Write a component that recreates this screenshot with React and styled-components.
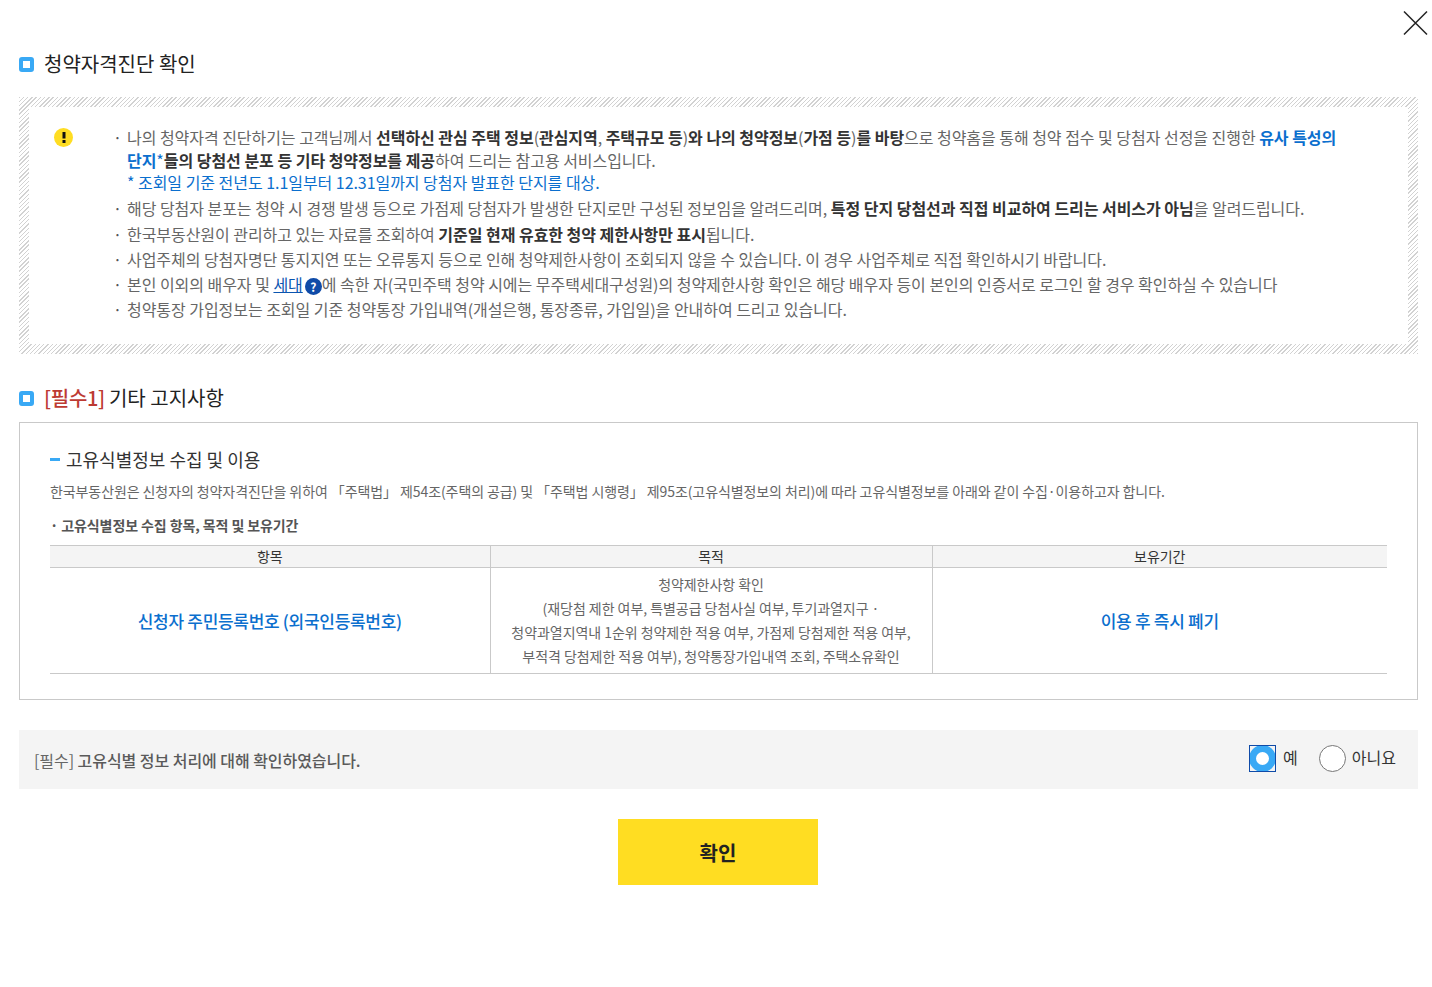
import React from "react";
import styled, { createGlobalStyle } from "styled-components";

const Global = createGlobalStyle`
  *, *::before, *::after { box-sizing: border-box; }
  html, body { margin: 0; padding: 0; background: #fff; }
  body { font-family: "Noto Sans CJK KR", "Noto Sans", sans-serif; color: #666; }
`;

const Page = styled.div`
  position: relative;
  width: 1432px;
  height: 987px;
  padding: 49px 14px 0 19px;
  overflow: hidden;
`;
const Close = styled.button`
  position: absolute;
  top: 10px;
  right: 3px;
  width: 26px;
  height: 26px;
  padding: 0;
  border: 0;
  background: none;
  display: block;
`;
const Heading = styled.h2`
  display: flex;
  align-items: center;
  gap: 10px;
  margin: 0;
  height: 28px;
  font-size: 20px;
  font-weight: 400;
  letter-spacing: 0;
  color: #222;
  &::before {
    content: "";
    width: 15px;
    height: 15px;
    border: 4.5px solid #39a9f5;
    border-radius: 3px;
    background: #fff;
    margin-top: 2px;
  }
`;
const RedLabel = styled.span`
  color: #bd3a32;
  font-weight: 500;
  letter-spacing: -0.3px;
  margin-right: 4px;
`;
const Hatch = styled.div`
  margin-top: 20px;
  height: 257px;
  padding: 10px;
  background: repeating-linear-gradient(135deg, #d2d2d2 0, #d2d2d2 1px, #fff 1px, #fff 3px);
`;
const Notice = styled.div`
  height: 100%;
  background: #fff;
  padding: 19px 58px 0 25px;
  display: flex;
  gap: 43px;
`;
const Warn = styled.span`
  flex: none;
  width: 19px;
  height: 19px;
  margin-top: 2px;
  border-radius: 50%;
  background: #ffdd22;
  display: flex;
  align-items: center;
  justify-content: center;
  svg { display: block; }
`;
const List = styled.ul`
  list-style: none;
  margin: 0;
  padding: 0;
  font-size: 16px;
  letter-spacing: -0.06px;
  word-spacing: 0.1px;
  color: #666;
`;
const Item = styled.li`
  position: relative;
  padding-left: 11px;
  line-height: 23px;
  margin-bottom: 2.3px;
  &::before {
    content: "·";
    position: absolute;
    left: -3px;
    top: 0;
    color: #555;
  }
`;
const B = styled.b`
  font-weight: 700;
  color: #333;
`;
const Blue = styled.span`
  color: #0b6fce;
  font-weight: ${(p) => (p.$bold ? 700 : 400)};
`;
const Sub = styled.span`
  display: block;
  color: #0b6fce;
  line-height: 20px;
  padding-bottom: 3px;
`;
const Link = styled.a`
  color: #0b55b0;
  text-decoration: underline;
`;
const Help = styled.span`
  display: inline-flex;
  align-items: center;
  justify-content: center;
  width: 17px;
  height: 17px;
  margin: 0 0 0 2px;
  border-radius: 50%;
  background: #0f4ba8;
  color: #fff;
  font-size: 12px;
  font-weight: 700;
  letter-spacing: 0;
  line-height: 17px;
  vertical-align: -1px;
`;
const SecondHeading = styled(Heading)`
  margin-top: 29px;
`;
const Card = styled.div`
  margin-top: 11px;
  height: 278px;
  border: 1px solid #c9c9c9;
  padding: 23px 30px 0;
`;
const CardTitle = styled.h3`
  display: flex;
  align-items: center;
  gap: 6px;
  margin: 0;
  height: 26px;
  font-size: 18px;
  font-weight: 400;
  letter-spacing: 0;
  color: #333;
  &::before {
    content: "";
    width: 10px;
    height: 3px;
    background: #39a9f5;
    margin-top: 1px;
  }
`;
const Desc = styled.p`
  margin: 9px 0 0;
  font-size: 14px;
  line-height: 20px;
  letter-spacing: -0.09px;
  color: #666;
`;
const SubTitle = styled.p`
  margin: 14px 0 0;
  font-size: 14px;
  line-height: 20px;
  font-weight: 700;
  letter-spacing: -0.1px;
  color: #555;
`;
const Table = styled.table`
  width: 100%;
  margin-top: 10px;
  border-collapse: collapse;
  table-layout: fixed;
  font-size: 14px;
  letter-spacing: -0.05px;
`;
const Th = styled.th`
  height: 22px;
  padding: 0 0 2px;
  background: #f4f4f4;
  border-top: 1px solid #c9c9c9;
  border-bottom: 1px solid #c9c9c9;
  border-left: ${(p) => (p.$first ? "0" : "1px solid #c9c9c9")};
  font-weight: 400;
  color: #333;
  line-height: 18px;
`;
const Td = styled.td`
  padding: ${(p) => (p.$key ? "6px 0 5px" : "4px 0 5px")};
  border-bottom: 1px solid #c9c9c9;
  border-left: ${(p) => (p.$first ? "0" : "1px solid #c9c9c9")};
  text-align: center;
  color: #666;
  line-height: 24px;
`;
const Strong = styled.strong`
  font-size: 17px;
  font-weight: 500;
  letter-spacing: -0.3px;
  color: #0b6fce;
`;
const Confirm = styled.div`
  height: 59px;
  margin-top: 30px;
  background: #f4f4f4;
  padding: 0 22px 0 15px;
  display: flex;
  align-items: center;
  justify-content: space-between;
`;
const ConfirmText = styled.span`
  font-size: 16px;
  letter-spacing: -0.05px;
  color: #666;
  b { font-weight: 500; color: #5a5a5a; }
`;
const Radios = styled.div`
  display: flex;
  align-items: center;
  gap: 21px;
  margin-top: -5px;
`;
const RadioLabel = styled.label`
  display: flex;
  align-items: center;
  gap: ${(p) => (p.$on ? 7 : 6)}px;
  font-size: 16px;
  color: #333;
`;
const RadioMark = styled.span`
  position: relative;
  width: 27px;
  height: 27px;
  margin-top: 2px;
  border-radius: 50%;
  display: block;
  background: #fff;
  border: ${(p) => (p.$on ? "7px solid #39a9f5" : "1px solid #777")};
  &::after {
    content: "";
    display: ${(p) => (p.$on ? "block" : "none")};
    position: absolute;
    inset: -7px;
    border: 1px solid #0f4ba8;
  }
`;
const Actions = styled.div`
  display: flex;
  justify-content: center;
  margin-top: 30px;
  padding-right: 1px;
`;
const Primary = styled.button`
  width: 200px;
  height: 66px;
  border: 0;
  padding: 0;
  background: #ffdd22;
  font-family: inherit;
  font-size: 20px;
  font-weight: 700;
  color: #222;
`;

export default function App() {
  return (
    <Page>
      <Global />
      <Close aria-label="닫기">
        <svg width="26" height="26" viewBox="0 0 26 26" fill="none" stroke="#222" strokeWidth="1.5">
          <path d="M1 1.5 24 24.5M24 1.5 1 24.5" />
        </svg>
      </Close>
      <Heading>청약자격진단 확인</Heading>
      <Hatch>
        <Notice>
          <Warn>
            <svg width="4" height="11" viewBox="0 0 4 11" fill="#111">
              <rect x="0.5" y="0" width="3" height="6.5" />
              <rect x="0.5" y="8" width="3" height="3" />
            </svg>
          </Warn>
          <List>
            <Item>
              나의 청약자격 진단하기는 고객님께서 <B>선택하신 관심 주택 정보</B>(<B>관심지역</B>, <B>주택규모 등</B>)<B>와 나의 청약정보</B>(<B>가점 등</B>)<B>를 바탕</B>으로 청약홈을 통해 청약 접수 및 당첨자 선정을 진행한 <Blue $bold>유사 특성의 단지</Blue><Blue>*</Blue><B>들의 당첨선 분포 등 기타 청약정보를 제공</B>하여 드리는 참고용 서비스입니다.
              <Sub>* 조회일 기준 전년도 1.1일부터 12.31일까지 당첨자 발표한 단지를 대상.</Sub>
            </Item>
            <Item>해당 당첨자 분포는 청약 시 경쟁 발생 등으로 가점제 당첨자가 발생한 단지로만 구성된 정보임을 알려드리며, <B>특정 단지 당첨선과 직접 비교하여 드리는 서비스가 아님</B>을 알려드립니다.</Item>
            <Item>한국부동산원이 관리하고 있는 자료를 조회하여 <B>기준일 현재 유효한 청약 제한사항만 표시</B>됩니다.</Item>
            <Item>사업주체의 당첨자명단 통지지연 또는 오류통지 등으로 인해 청약제한사항이 조회되지 않을 수 있습니다. 이 경우 사업주체로 직접 확인하시기 바랍니다.</Item>
            <Item>본인 이외의 배우자 및 <Link>세대</Link><Help>?</Help>에 속한 자(국민주택 청약 시에는 무주택세대구성원)의 청약제한사항 확인은 해당 배우자 등이 본인의 인증서로 로그인 할 경우 확인하실 수 있습니다</Item>
            <Item>청약통장 가입정보는 조회일 기준 청약통장 가입내역(개설은행, 통장종류, 가입일)을 안내하여 드리고 있습니다.</Item>
          </List>
        </Notice>
      </Hatch>
      <SecondHeading><span><RedLabel>[필수1]</RedLabel>기타 고지사항</span></SecondHeading>
      <Card>
        <CardTitle>고유식별정보 수집 및 이용</CardTitle>
        <Desc>한국부동산원은 신청자의 청약자격진단을 위하여 「주택법」 제54조(주택의 공급) 및 「주택법 시행령」 제95조(고유식별정보의 처리)에 따라 고유식별정보를 아래와 같이 수집·이용하고자 합니다.</Desc>
        <SubTitle>· 고유식별정보 수집 항목, 목적 및 보유기간</SubTitle>
        <Table>
          <colgroup>
            <col style={{ width: "440px" }} />
            <col style={{ width: "442px" }} />
            <col />
          </colgroup>
          <thead>
            <tr>
              <Th $first>항목</Th>
              <Th>목적</Th>
              <Th>보유기간</Th>
            </tr>
          </thead>
          <tbody>
            <tr>
              <Td $first $key><Strong>신청자 주민등록번호 (외국인등록번호)</Strong></Td>
              <Td>
                청약제한사항 확인<br />
                (재당첨 제한 여부, 특별공급 당첨사실 여부, 투기과열지구 ·<br />
                청약과열지역내 1순위 청약제한 적용 여부, 가점제 당첨제한 적용 여부,<br />
                부적격 당첨제한 적용 여부), 청약통장가입내역 조회, 주택소유확인
              </Td>
              <Td $key><Strong>이용 후 즉시 폐기</Strong></Td>
            </tr>
          </tbody>
        </Table>
      </Card>
      <Confirm>
        <ConfirmText>[필수] <b>고유식별 정보 처리에 대해 확인하였습니다.</b></ConfirmText>
        <Radios>
          <RadioLabel $on><RadioMark $on />예</RadioLabel>
          <RadioLabel><RadioMark />아니요</RadioLabel>
        </Radios>
      </Confirm>
      <Actions><Primary>확인</Primary></Actions>
    </Page>
  );
}
